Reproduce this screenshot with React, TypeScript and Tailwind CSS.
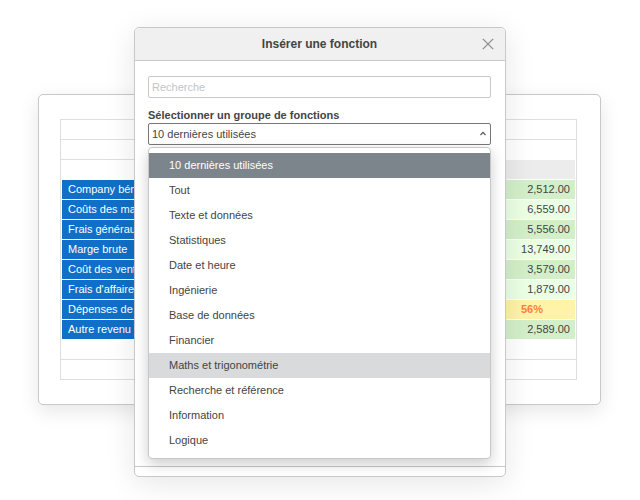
import { useState } from "react";

const groups = [
  "10 dernières utilisées",
  "Tout",
  "Texte et données",
  "Statistiques",
  "Date et heure",
  "Ingénierie",
  "Base de données",
  "Financier",
  "Maths et trigonométrie",
  "Recherche et référence",
  "Information",
  "Logique",
];

const dark = "bg-[#d3efc9] pr-[5px]";
const light = "bg-[#eaffe4] pr-[5px]";
const percent = "bg-[#fff3a8] pr-8 font-bold text-[#ff7f40]";

const rows = [
  { label: "Company bén", value: "2,512.00", style: dark },
  { label: "Coûts des mar", value: "6,559.00", style: light },
  { label: "Frais généraux", value: "5,556.00", style: dark },
  { label: "Marge brute", value: "13,749.00", style: light },
  { label: "Coût des vent", value: "3,579.00", style: dark },
  { label: "Frais d'affaire", value: "1,879.00", style: light },
  { label: "Dépenses de", value: "56%", style: percent },
  { label: "Autre revenu", value: "2,589.00", style: dark },
];

function Sheet() {
  const empty = "h-5 border-b border-[#dedede] p-0";
  return (
    <table className="w-full table-fixed border-separate border-spacing-0 border-x border-t border-[#dedede] text-[11px] leading-[18px]">
      <tbody>
        <tr>
          <td colSpan={3} className={empty} />
        </tr>
        <tr>
          <td colSpan={2} className={empty} />
          <td className="h-5 p-0" />
        </tr>
        <tr>
          <td className="h-5 p-0" />
          <td className="h-5 p-0" />
          <td className="h-5 border-r border-b border-white bg-[#ececec] p-0" />
        </tr>
        {rows.map((row) => (
          <tr key={row.label}>
            <th
              scope="row"
              className="h-5 border-b border-l border-white bg-[#106fc8] py-0 pr-0 pl-1.5 text-left align-top font-normal whitespace-nowrap text-white"
            >
              {row.label}
            </th>
            <td className="h-5 p-0" />
            <td className={"h-5 border-r border-b border-white py-0 pl-0 text-right align-top " + row.style}>
              {row.value}
            </td>
          </tr>
        ))}
        <tr>
          <td colSpan={3} className={empty} />
        </tr>
        <tr>
          <td colSpan={3} className={empty} />
        </tr>
      </tbody>
    </table>
  );
}

function GroupList({ selected, onSelect }: { selected: string; onSelect: (g: string) => void }) {
  return (
    <ul
      role="listbox"
      aria-label="Groupes de fonctions"
      className="absolute inset-x-0 top-full mt-0.5 rounded-[4px] border border-[#c8c8c8] bg-white py-[5px] shadow-[0_5px_14px_rgba(0,0,0,0.2)]"
    >
      {groups.map((group) => {
        const active = group === selected;
        const hovered = group === "Maths et trigonométrie";
        return (
          <li key={group} role="option" aria-selected={active}>
            <button
              type="button"
              onClick={() => onSelect(group)}
              className={
                "block h-[25px] w-full px-5 text-left " +
                (active ? "bg-[#7d858c] text-white" : hovered ? "bg-[#d8dadc]" : "bg-white")
              }
            >
              {group}
            </button>
          </li>
        );
      })}
    </ul>
  );
}

export default function App() {
  const [group, setGroup] = useState(groups[0]);
  return (
    <div className="relative min-h-screen overflow-hidden bg-white pt-[94px] font-['Liberation_Sans',Arial,sans-serif] text-[11px] text-[#444]">
      <main className="mr-[39px] ml-[38px] rounded-[5px] border border-[#c8c8c8] bg-white pt-6 pr-[23px] pb-6 pl-[21px] shadow-[0_6px_20px_rgba(0,0,0,0.1)]">
        <Sheet />
      </main>

      <section
        role="dialog"
        aria-labelledby="dialog-title"
        className="absolute top-[27px] left-1/2 flex w-[372px] -translate-x-1/2 flex-col rounded-[5px] border border-[#c8c8c8] bg-white shadow-[0_6px_30px_rgba(0,0,0,0.1)]"
      >
        <header className="grid h-[33px] grid-cols-[1fr_auto_1fr] items-center rounded-t-[4px] border-b border-[#c8c8c8] bg-[#f0f0f0] pr-[11px] pl-2.5">
          <h1 id="dialog-title" className="col-start-2 text-[12px] leading-4 font-bold">
            Insérer une fonction
          </h1>
          <button type="button" aria-label="Fermer" className="justify-self-end">
            <svg width="12" height="12" viewBox="0 0 12 12" fill="none" stroke="#8a8a8a" strokeWidth="1.2">
              <path d="M0.8 0.8 11.2 11.2M11.2 0.8 0.8 11.2" />
            </svg>
          </button>
        </header>

        <div className="min-h-[405px] pt-[15px] pr-3.5 pl-[13px]">
          <input
            type="text"
            aria-label="Recherche"
            placeholder="Recherche"
            className="block h-[22px] w-full rounded-[2px] border border-[#c8c8c8] bg-white px-[3px] outline-none placeholder:text-[#c4c4c4]"
          />
          <label htmlFor="group" className="mt-2.5 block leading-[15px] font-bold">
            Sélectionner un groupe de fonctions
          </label>
          <div className="relative">
            <select
              id="group"
              value={group}
              onChange={(e) => setGroup(e.target.value)}
              className="block h-[22px] w-full appearance-none rounded-[2px] border border-[#777] bg-white px-[3px] outline-none"
            >
              {groups.map((g) => (
                <option key={g}>{g}</option>
              ))}
            </select>
            <svg
              className="pointer-events-none absolute top-2 right-[5px]"
              width="6"
              height="5"
              viewBox="0 0 6 5"
              fill="none"
              stroke="#555"
              strokeWidth="1.2"
            >
              <path d="M0.5 4 3 1.4 5.5 4" />
            </svg>
            <GroupList selected={group} onSelect={setGroup} />
          </div>
        </div>
        <footer className="h-2.5 border-t border-[#c8c8c8]" />
      </section>
    </div>
  );
}
